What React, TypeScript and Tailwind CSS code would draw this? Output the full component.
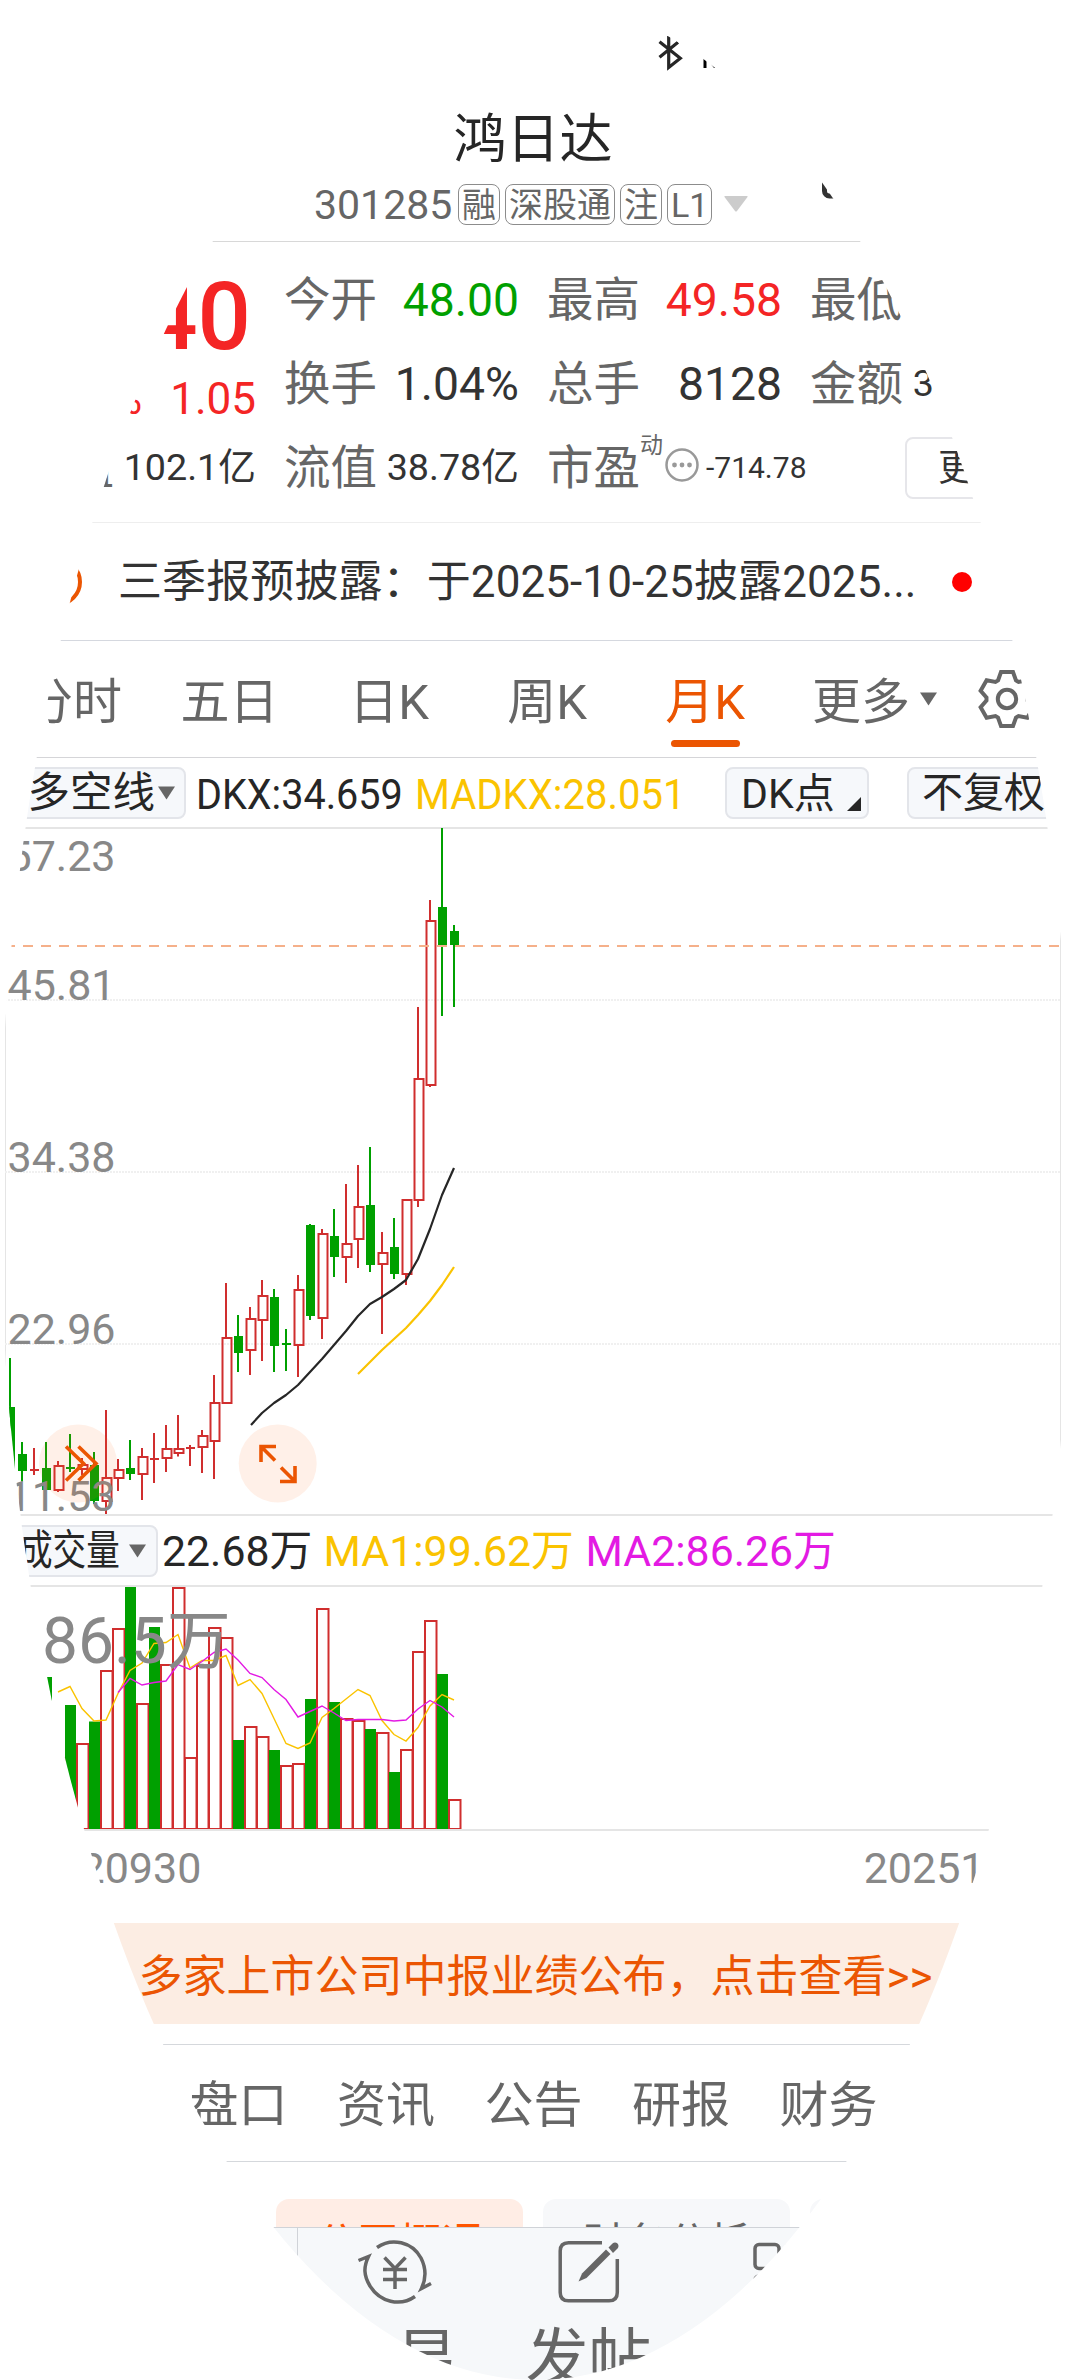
import type { ReactNode } from 'react'

type Candle = { up: boolean; high: number; low: number; top: number; bottom: number }

const UP = '#d02e2e'
const DOWN = '#00a000'
const STEP = 12

// [up, high, low, body top, body bottom], in chart pixels
const candleRows: [number, number, number, number, number][] = [
  [0, 529, 650, 578, 642],
  [0, 613, 652.5, 625, 642],
  [1, 619, 646, 640, 642],
  [0, 613, 661, 639, 661],
  [1, 632, 663, 637, 661],
  [0, 605, 643, 638, 640],
  [1, 629, 646, 636, 640],
  [0, 623, 675, 636, 672],
  [1, 581, 686, 649, 672],
  [1, 630, 662, 641, 649],
  [0, 611, 651, 639, 645],
  [1, 619, 671, 628, 645],
  [1, 604, 654, 629, 631],
  [1, 596, 643, 620, 629],
  [1, 586, 627.5, 620, 624],
  [1, 616, 637, 618, 620],
  [1, 601, 644, 607, 618],
  [1, 546, 650, 574, 612],
  [1, 454, 575, 509, 574],
  [0, 486, 543, 507, 524],
  [1, 478, 546, 490, 521],
  [1, 451, 532, 467, 491],
  [0, 460, 543, 468, 517],
  [0, 500, 542, 514, 516],
  [1, 446, 548, 461, 516],
  [0, 395, 491, 396, 487],
  [1, 400, 510, 405, 489],
  [0, 380, 448, 407, 428],
  [1, 355, 454, 415, 428],
  [1, 336, 439, 378, 410],
  [0, 318, 443, 376, 436],
  [1, 403, 505, 424, 435],
  [0, 389, 450, 418, 445],
  [1, 370, 456, 371, 445],
  [1, 178, 378, 250, 371],
  [1, 71, 258, 92, 256],
  [0, -1, 187, 78, 117],
  [0, 96, 178, 102, 116],
]

const candles: Candle[] = candleRows.map(([up, high, low, top, bottom]) => ({
  up: up === 1,
  high,
  low,
  top,
  bottom,
}))

const dkx =
  '251,596 262,584 274,574 286,566 298,556 310,543 322,530 334,516 346,502 358,487 370,475 382,468 394,460 406,451 418,430 430,400 442,366 454,339'
const madkx = '358,545 370,533 382,521 394,510 406,499 418,486 430,472 442,456 454,438'

// [up, bar top], first bar sits at x = 46
const volumes: [number, number][] = [
  [0, 90], [1, 171], [0, 118], [1, 157], [0, 134.5], [1, 84], [1, 42], [0, -1], [1, 117], [0, 40],
  [1, 78], [1, 1], [1, 171], [1, 79], [1, 41], [1, 51], [0, 153], [1, 140], [1, 150], [0, 163],
  [1, 179], [1, 177], [0, 112], [1, 22], [0, 115], [1, 132], [1, 134], [0, 142], [1, 146], [0, 185],
  [1, 163], [1, 65], [1, 34], [0, 87], [1, 213],
]

const volMa1 =
  '58,105 70,99.5 82,121.5 94,134 106,133 118,106.5 130,83.5 142,76 154,56.5 166,55.5 178,47.5 190,81 202,73.5 214,73.5 226,68.5 238,98.5 250,92.5 262,106.5 274,131.5 286,156.5 298,161.5 310,156 322,130.5 334,121.5 346,112 358,102.5 370,108.5 382,133.5 394,147.5 406,154 418,140.5 430,119 442,107.5 454,113'
const volMa2 =
  '118,105.5 130,91.5 142,98 154,95.5 166,94 178,77.5 190,82.5 202,74.5 214,65.5 226,62 238,73 250,86.5 262,90.5 274,102.5 286,112.5 298,130 310,124.5 322,119 334,126 346,133.5 358,132.5 382,132.5 394,134 406,133 418,122 430,113.5 442,120 454,130'

function Badge({ children }: { children: ReactNode }) {
  return (
    <span className="flex h-[41px] items-center rounded-[8px] border border-[#8c8c8c] px-[3px] text-[34px]">
      {children}
    </span>
  )
}

function Quote({ label, value, color = 'text-[#333333]' }: { label: string; value: string; color?: string }) {
  const size = value.length > 5 || value.endsWith('亿') ? 'text-[37.7px]' : 'text-[46.3px]'
  return (
    <div className="flex h-[84px] items-center justify-between whitespace-nowrap">
      <span className="text-[46.5px] text-[#666666]">{label}</span>
      <span className={`${size} ${color}`}>{value}</span>
    </div>
  )
}

function Caret({ color, className = '' }: { color: string; className?: string }) {
  return (
    <svg viewBox="0 0 18 14" className={`h-[14px] w-[17px] shrink-0 ${className}`}>
      <path d="M0 0H18L9 14Z" fill={color} />
    </svg>
  )
}

function gearPoints() {
  const tooth = [[-9, -18.5], [-6, -27], [6, -27], [9, -18.5]]
  const points: string[] = []
  for (let i = 0; i < 6; i++) {
    const a = (i * Math.PI) / 3
    for (const [x, y] of tooth) {
      points.push(`${30 + x * Math.cos(a) - y * Math.sin(a)},${30 + x * Math.sin(a) + y * Math.cos(a)}`)
    }
  }
  return points.join(' ')
}

function GearIcon() {
  return (
    <svg viewBox="0 0 60 60" className="h-[60px] w-[60px] shrink-0" fill="none" stroke="#666666" strokeWidth="4">
      <polygon points={gearPoints()} />
      <circle cx="30" cy="30" r="9.2" />
    </svg>
  )
}

function Header() {
  return (
    <header className="h-[241px] shrink-0">
      <div className="flex h-[100px] pt-[30px]">
        <svg viewBox="0 0 90 44" className="ml-[650px] h-[44px] w-[90px]">
          <path d="M9.5 11.8L30.3 28.3L18.7 37.5V6M28 12.2L9.5 27.3" fill="none" stroke="#262626" strokeWidth="3.2" />
          <path d="M53.5 18H56.500V38H53.5ZM56.5 28.5L64 38H70V24Z" fill="#000000" />
        </svg>
      </div>
      <h1 className="flex h-[78px] items-center justify-center pr-[7px] pt-[3px] text-[53px] text-[#262626]">鸿日达</h1>
      <div className="flex h-[52px] items-center text-[#666666]">
        <span className="ml-[314px] w-[144px] pt-[2px] text-[41px]">301285</span>
        <div className="flex gap-[5px] pt-px">
          <Badge>融</Badge>
          <Badge>深股通</Badge>
          <Badge>注</Badge>
          <Badge>L1</Badge>
        </div>
        <svg viewBox="0 0 24 16" className="ml-[12px] h-[16px] w-[24px]">
          <path d="M1 0H23Q24 0 23.5 1L13 15Q12 16 11 15L0.5 1Q0 0 1 0Z" fill="#cccccc" />
        </svg>
        <svg viewBox="0 0 40 40" className="mb-[44px] ml-[73px] h-[40px] w-[40px]" fill="none" stroke="#333333" strokeWidth="5">
          <rect x="3.5" y="3" width="32" height="31" rx="5" />
        </svg>
      </div>
    </header>
  )
}

function QuotePanel() {
  return (
    <section className="flex h-[281px] shrink-0 gap-[28px] border-t border-[#d8d8d8] pl-[21px] pt-[16px]">
      <div className="w-[235px]">
        <div className="flex h-[116px] items-center justify-end pr-[5px] pt-[2px] text-[94px] font-medium text-[#f42525]">49.40</div>
        <div className="flex h-[52px] items-center justify-end gap-[28px] pb-[3px] text-[44px] text-[#f42525]">
          <span>2.17%</span>
          <span>1.05</span>
        </div>
        <Quote label="总值" value="102.1亿" />
      </div>
      <div className="w-[235px]">
        <Quote label="今开" value="48.00" color="text-[#00a000]" />
        <Quote label="换手" value="1.04%" />
        <Quote label="流值" value="38.78亿" />
      </div>
      <div className="w-[235px]">
        <Quote label="最高" value="49.58" color="text-[#f42525]" />
        <Quote label="总手" value="8128" />
        <div className="flex h-[84px] items-center whitespace-nowrap">
          <span className="shrink-0 text-[46.5px] text-[#666666]">市盈</span>
          <span className="mb-[46px] shrink-0 text-[23px] text-[#666666]">动</span>
          <svg viewBox="0 0 36 36" className="mb-[7px] ml-px h-[36px] w-[36px] shrink-0">
            <circle cx="18" cy="18" r="15.5" fill="none" stroke="#999999" strokeWidth="2.5" />
            <g fill="#999999">
              <circle cx="10.5" cy="18" r="2.4" />
              <circle cx="18" cy="18" r="2.4" />
              <circle cx="25.5" cy="18" r="2.4" />
            </g>
          </svg>
          <span className="ml-[6px] text-[30px] text-[#333333]">-714.78</span>
        </div>
      </div>
      <div className="w-[235px]">
        <Quote label="最低" value="47.68" color="text-[#00a000]" />
        <Quote label="金额" value="3.985亿" />
        <div className="flex h-[84px] items-center justify-end">
          <div className="flex h-[62px] w-[140px] items-center justify-center rounded-[8px] border-2 border-[#e6e6ea] text-[37px] text-[#333333]">
            更多
          </div>
        </div>
      </div>
    </section>
  )
}

function NewsRow() {
  return (
    <section className="flex h-[118px] shrink-0 items-center border-t border-[#eeeeee]">
      <svg viewBox="0 0 56 56" className="ml-[30px] h-[56px] w-[56px] shrink-0">
        <circle cx="28" cy="28" r="22" fill="none" stroke="#eb5502" strokeWidth="4" />
      </svg>
      <p className="ml-[32px] w-[834px] shrink-0 whitespace-nowrap text-[44px] tracking-[0.1px] text-[#333333]">
        三季报预披露：于2025-10-25披露2025...
      </p>
      <span className="h-5 w-5 rounded-full bg-[#ff0000]" />
    </section>
  )
}

function PeriodTabs() {
  const tabs = [
    { label: '分时', box: 'w-[152px] pr-[6px]' },
    { label: '五日', box: 'w-[158px] pr-[3px]' },
    { label: '日K', box: 'w-[158px]' },
    { label: '周K', box: 'w-[158px]' },
    { label: '月K', box: 'w-[158px]' },
  ]
  return (
    <nav className="flex h-[117px] shrink-0 border-t border-[#d5d8df] text-[49px] text-[#666666]">
      {tabs.map((tab) => {
        const active = tab.label === '月K'
        return (
          <div
            key={tab.label}
            className={`flex shrink-0 flex-col items-center pt-[7px] ${tab.box} ${active ? 'text-[#eb5502]' : ''}`}
          >
            <span className="flex h-[92px] items-center pt-[16px]">{tab.label}</span>
            {active && <span className="h-[7px] w-[69px] rounded-full bg-[#eb5502]" />}
          </div>
        )
      })}
      <div className="ml-[28px] flex h-[116px] shrink-0 items-center">
        <span className="pt-[6px]">更多</span>
        <Caret color="#666666" className="ml-[10px]" />
        <span className="ml-[40px]">
          <GearIcon />
        </span>
      </div>
    </nav>
  )
}

function IndicatorBar() {
  return (
    <div className="flex h-[70px] shrink-0 items-center whitespace-nowrap border-t border-[#d5d5d8] text-[#262626]">
      <div className="ml-[8px] flex h-[52px] w-[178px] shrink-0 items-center justify-end rounded-[8px] border-2 border-[#e3e5ea] bg-[#f6f8fb] pr-[9px] text-[42.5px]">
        <span className="pt-[1px]">多空线</span>
        <Caret color="#666666" className="ml-[3px]" />
      </div>
      <span className="ml-[10px] w-[219px] shrink-0 origin-left scale-x-[0.92] pt-[3px] text-[43px]">DKX:34.659</span>
      <span className="w-[310px] shrink-0 origin-left scale-x-[0.93] pt-[3px] text-[43px] text-[#fac300]">MADKX:28.051</span>
      <div className="flex h-[52px] w-[144px] shrink-0 items-center rounded-[8px] border-2 border-[#e3e5ea] bg-[#f6f8fb] pl-[14px] text-[41px]">
        <span className="pt-[3px]">DK点</span>
        <svg viewBox="0 0 14 14" className="ml-[12px] mt-[22px] h-[14px] w-[14px] shrink-0">
          <path d="M14 0V14H0Z" fill="#262626" />
        </svg>
      </div>
      <div className="ml-[38px] flex h-[52px] w-[160px] shrink-0 items-center rounded-[8px] border-2 border-[#e3e5ea] bg-[#f6f8fb] pl-[13px] pt-[2px] text-[41px]">
        不复权
      </div>
    </div>
  )
}

function PriceChart() {
  const grid = [171, 343, 515]
  const labels: [string, number][] = [
    ['57.23', 42],
    ['45.81', 170.5],
    ['34.38', 342.5],
    ['22.96', 514.5],
    ['11.53', 682],
  ]
  return (
    <svg viewBox="0 0 1073 685" className="block h-[685px] w-[1073px] shrink-0 overflow-visible">
      <path d="M5.5 0V685M1060.5 0V685" stroke="#e5e5e5" strokeWidth="1" />
      {grid.map((y) => (
        <path key={y} d={`M5 ${y}H1060`} stroke="#f0f0f0" strokeWidth="2" strokeDasharray="2 1" />
      ))}
      {candles.map((c, i) => {
        const x = 10 + i * STEP
        const color = c.up ? UP : DOWN
        const hollow = c.up && c.bottom - c.top > 2
        return (
          <g key={i}>
            <path d={hollow ? `M${x} ${c.high}V${c.top}M${x} ${c.bottom}V${c.low}` : `M${x} ${c.high}V${c.low}`} stroke={color} strokeWidth="2" />
            {hollow ? (
              <rect x={x - 3.5} y={c.top} width="9" height={c.bottom - c.top} fill="none" stroke={color} strokeWidth="2" />
            ) : (
              <rect x={x - 4} y={c.top} width="9" height={c.bottom - c.top} fill={color} />
            )}
          </g>
        )
      })}
      <path d="M5 117H1060" stroke="#f5b08a" strokeWidth="2" strokeDasharray="10 8" />
      <polyline points={dkx} fill="none" stroke="#262626" strokeWidth="2.2" strokeLinejoin="round" />
      <polyline points={madkx} fill="none" stroke="#fac300" strokeWidth="2.2" strokeLinejoin="round" />
      <g fill="#888888" fontSize="43">
        {labels.map(([text, y]) => (
          <text key={text} x="7.5" y={y}>
            {text}
          </text>
        ))}
      </g>
      <g fill="#ff6a20" fillOpacity="0.1">
        <circle cx="78" cy="634.5" r="39" />
        <circle cx="277.7" cy="634.5" r="39" />
      </g>
      <g fill="none" stroke="#eb5502" strokeWidth="3.6">
        <path d="M66 617.5L83.5 634.5L66 651.5M78.5 617.5L96 634.5L78.5 651.5" />
        <path d="M276 617.5H261V633M261 617.5L275 631.5" />
        <path d="M295 637V652.5H280M295 652.5L281 638.5" />
      </g>
    </svg>
  )
}

function VolumeBar() {
  return (
    <div className="flex h-[73px] shrink-0 items-center whitespace-nowrap border-y-2 border-[#e5e5e5] text-[42.8px] text-[#262626]">
      <div className="ml-[8px] flex h-[52px] w-[150px] shrink-0 items-center rounded-[8px] border-2 border-[#e3e5ea] bg-[#f6f8fb] pl-[9px]">
        <span className="w-[110px] origin-left scale-x-[0.8] pt-[1px] text-[42px]">成交量</span>
        <Caret color="#666666" />
      </div>
      <span className="ml-[4px] w-[161.5px] pt-[1px]">22.68万</span>
      <span className="w-[262px] pt-[1px] text-[#fac300]">MA1:99.62万</span>
      <span className="pt-[1px] text-[#e31ae3]">MA2:86.26万</span>
    </div>
  )
}

function VolumeChart() {
  return (
    <svg viewBox="0 0 1073 242" className="block h-[242px] w-[1073px] shrink-0">
      {volumes.map(([up, top], i) => {
        const x = 46 + i * STEP
        return up ? (
          <rect key={i} x={x - 5} y={top} width="11.5" height={242 - top} fill="none" stroke={UP} strokeWidth="2" />
        ) : (
          <rect key={i} x={x - 5} y={top} width="11" height={243 - top} fill={DOWN} />
        )
      })}
      <polyline points={volMa1} fill="none" stroke="#fac300" strokeWidth="1.4" />
      <polyline points={volMa2} fill="none" stroke="#e31ae3" strokeWidth="1.4" />
      <text x="6" y="76" fontSize="64" fill="#888888">
        186.5万
      </text>
    </svg>
  )
}

function InfoTabs() {
  const tabs = ['盘口', '资讯', '公告', '研报', '财务']
  return (
    <nav className="mt-[20px] flex h-[118px] shrink-0 items-center justify-center gap-[49.5px] border-y border-[#d5d8dc] pr-[6px] pt-[5px] text-[49px] text-[#666666]">
      {tabs.map((tab) => (
        <span key={tab}>{tab}</span>
      ))}
    </nav>
  )
}

function SubTabs() {
  return (
    <div className="flex h-[65px] shrink-0 gap-[20px] overflow-hidden pl-[276px] pt-[37px] text-[42px]">
      <div className="flex h-[84px] w-[247px] shrink-0 items-center justify-center rounded-[13px] bg-[#ffede5] pt-[6px] text-[#ff5500]">
        公司概况
      </div>
      <div className="flex h-[84px] w-[247px] shrink-0 items-center justify-center rounded-[13px] bg-[#f7f8fa] pt-[6px] text-[#666666]">
        财务分析
      </div>
      <div className="h-[84px] w-[247px] shrink-0 rounded-[13px] bg-[#f7f8fa]" />
    </div>
  )
}

function BottomBar() {
  return (
    <footer className="flex h-[153px] shrink-0 border-t border-[#d0d3d8] bg-[#f6f8fa] pl-[297px] text-[63px] text-[#666666]">
      <div className="flex flex-1 flex-col items-center border-l border-[#d0d3d8] pt-[5px]">
        <svg viewBox="0 0 78 78" className="h-[78px] w-[78px] shrink-0" fill="none" stroke="#666666" strokeWidth="3.5">
          <path d="M21 14.5C36 4 56 9 65 25C70 35 71 44 65.5 55.5L75 50.5" />
          <path d="M59 63.5C44 74 24 69 14 53C7.5 42 7.5 34 12.5 23.5L2.5 27.5" />
          <path d="M28.5 24.5L39 35.5L49.5 24.5M39 35.5V56M27 36.5H51M27 46.5H51" />
        </svg>
        <span className="mt-[16px]">交易</span>
      </div>
      <div className="flex flex-1 flex-col items-center pt-[5px]">
        <svg viewBox="0 0 78 78" className="h-[78px] w-[78px] shrink-0" fill="none" stroke="#666666" strokeWidth="3.5">
          <path d="M52 9.7H18.5Q10.2 9.7 10.2 18V59.5Q10.2 67.8 18.5 67.8H59Q67.3 67.8 67.3 59.5V26" />
          <path d="M28.5 48.5L32 40.5L56 16.5L60.5 21L36.5 45Z" fill="#666666" stroke="none" />
          <path d="M58.5 14.5L62.5 10.5Q65 8.5 67.5 10.5Q69.5 13 67.5 15.5L63 20Z" fill="#666666" stroke="none" />
        </svg>
        <span className="mt-[16px]">发帖</span>
      </div>
      <div className="flex flex-1 flex-col items-center pt-[5px]">
        <svg viewBox="0 0 78 78" className="h-[78px] w-[78px] shrink-0" fill="none" stroke="#666666" strokeWidth="3.5">
          <rect x="12" y="11.5" width="24" height="24" rx="4" />
          <rect x="12" y="43" width="24" height="24" rx="4" />
          <rect x="43" y="43" width="24" height="24" rx="4" />
          <rect x="43" y="11.5" width="24" height="24" rx="4" />
        </svg>
      </div>
      <div className="flex-1" />
    </footer>
  )
}

export default function App() {
  return (
    <div className="flex h-[2380px] w-[1073px] flex-col overflow-hidden bg-white font-[Roboto,'Noto_Sans_CJK_SC',sans-serif] leading-none [clip-path:ellipse(50%_50%)]">
      <Header />
      <QuotePanel />
      <NewsRow />
      <PeriodTabs />
      <IndicatorBar />
      <div className="h-[2px] shrink-0 bg-[#e5e5e5]" />
      <PriceChart />
      <VolumeBar />
      <VolumeChart />
      <div className="flex h-[94px] shrink-0 items-center justify-between border-t-2 border-[#e5e5e5] pb-[18px] pl-[8px] pr-[16px] text-[43px] text-[#888888]">
        <span>20220930</span>
        <span>20251022</span>
      </div>
      <div className="flex h-[101px] shrink-0 items-center justify-center bg-[#fcede3] pr-[2px] pt-[6px] text-[44px] text-[#eb5502]">
        多家上市公司中报业绩公布，点击查看&gt;&gt;
      </div>
      <InfoTabs />
      <SubTabs />
      <BottomBar />
    </div>
  )
}
